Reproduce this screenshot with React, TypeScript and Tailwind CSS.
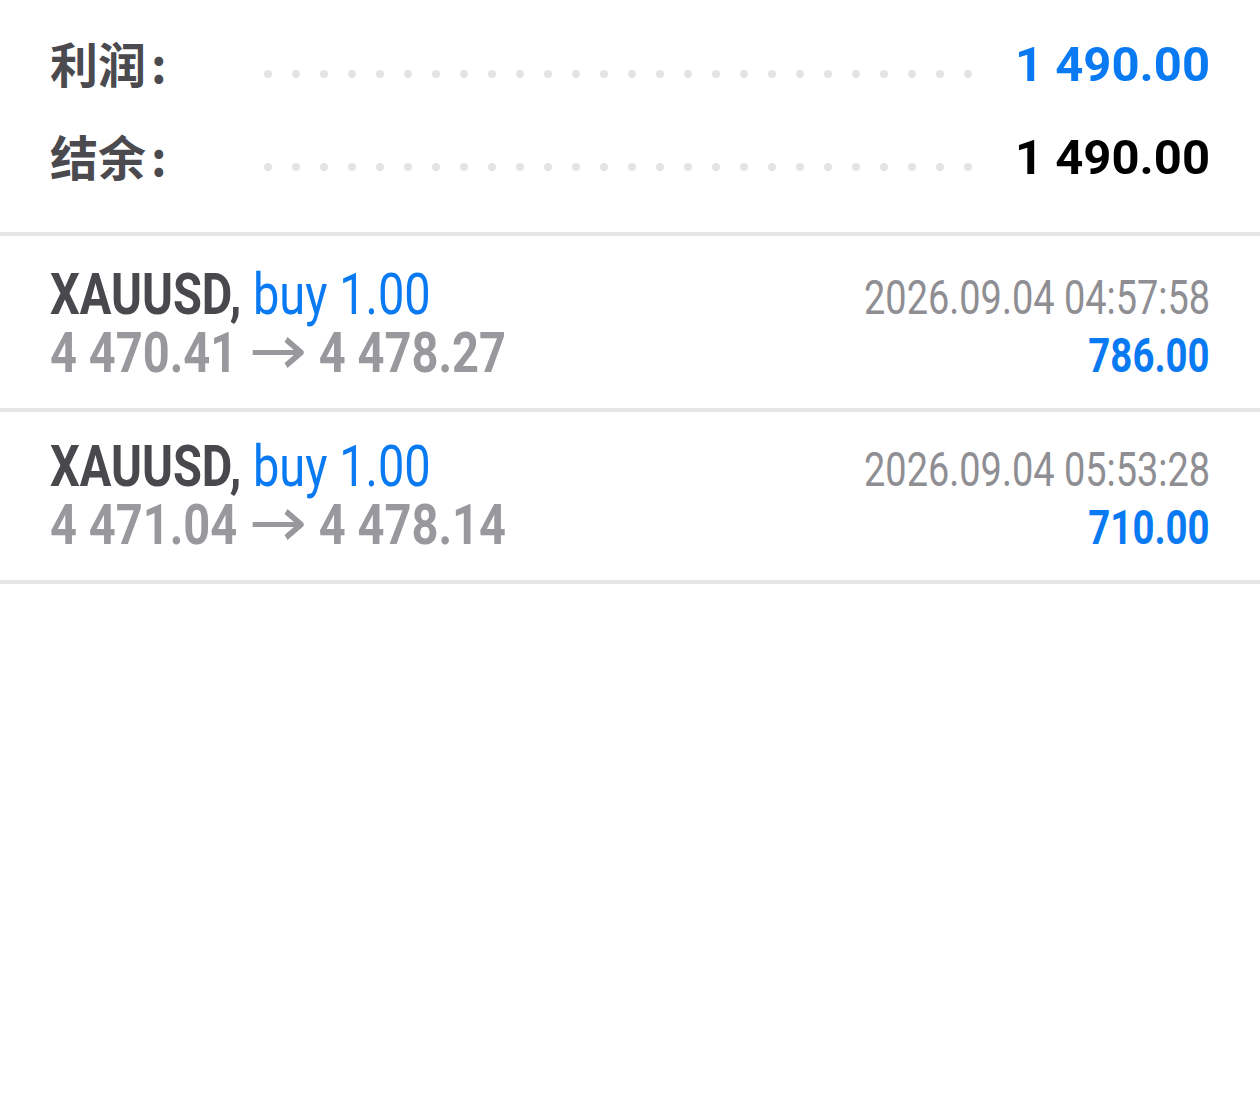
import React from 'react'

type Trade = {
  symbol: string
  side: string
  volume: string
  openPrice: string
  closePrice: string
  time: string
  profit: string
  padTop: string
}

const trades: Trade[] = [
  {
    symbol: 'XAUUSD',
    side: 'buy',
    volume: '1.00',
    openPrice: '4 470.41',
    closePrice: '4 478.27',
    time: '2026.09.04 04:57:58',
    profit: '786.00',
    padTop: 'pt-[28px]',
  },
  {
    symbol: 'XAUUSD',
    side: 'buy',
    volume: '1.00',
    openPrice: '4 471.04',
    closePrice: '4 478.14',
    time: '2026.09.04 05:53:28',
    profit: '710.00',
    padTop: 'pt-[24px]',
  },
]

const DOTS = Array.from({ length: 26 })

const Divider = () => <div className="h-[4px] bg-[#e6e6e6]" />

// drawn wide, the parent span squeezes it horizontally
const Arrow = () => (
  <svg className="mx-[18px] inline-block h-[41px] w-[61px]" fill="none" preserveAspectRatio="none" viewBox="0 0 61 41">
    <path d="M0 15.5 H58" stroke="currentColor" strokeWidth="5" />
    <path d="M40 2.5 L58 15.5 L40 28.5" stroke="currentColor" strokeWidth="6" />
  </svg>
)

const SummaryRow = ({ label, value, valueClass }: { label: string; value: string; valueClass: string }) => (
  <div className="flex h-[93px] items-center">
    <div className="mb-[5px] w-[214px] font-['Noto_Sans_CJK_SC',sans-serif] text-[48px] font-bold leading-none text-[#4a4a4f]">
      {label}
      <span className="ml-[5px]">:</span>
    </div>
    <div className="mt-[18px] flex w-[708px] justify-between">
      {DOTS.map((_, i) => (
        <span className="h-[8px] w-[8px] rounded-full bg-[#e4e4e4]" key={i} />
      ))}
    </div>
    <div className={`flex-1 text-right text-[49px] font-bold leading-none ${valueClass}`}>{value}</div>
  </div>
)

const TradeRow = ({ trade }: { trade: Trade }) => (
  <div className={`px-[50px] pb-[25px] ${trade.padTop}`}>
    <div className="flex items-baseline justify-between leading-[60px]">
      <span className="inline-block origin-left scale-x-[0.81] whitespace-nowrap text-[58px]">
        <span className="font-bold text-[#48484d]">{trade.symbol},</span>{' '}
        <span className="text-[#0a7af2]">
          {trade.side} {trade.volume}
        </span>
      </span>
      <span className="inline-block origin-right scale-x-[0.79] whitespace-nowrap text-[48px] leading-none text-[#8e8e93]">
        {trade.time}
      </span>
    </div>
    <div className="flex items-baseline justify-between leading-[59px]">
      <span className="inline-block origin-left scale-x-[0.84] whitespace-nowrap text-[56px] font-bold text-[#98989d]">
        {trade.openPrice}
        <Arrow />
        {trade.closePrice}
      </span>
      <span className="inline-block origin-right scale-x-[0.8] whitespace-nowrap text-[48px] font-bold leading-none text-[#0a7af2]">
        {trade.profit}
      </span>
    </div>
  </div>
)

export default function App() {
  return (
    <div className="h-[1105px] w-[1260px] bg-white font-['Roboto',sans-serif]">
      <div className="px-[50px] pt-[18px] pb-[28px]">
        <SummaryRow label="利润" value="1 490.00" valueClass="text-[#0a7af2]" />
        <SummaryRow label="结余" value="1 490.00" valueClass="text-black" />
      </div>
      <Divider />
      {trades.map((trade, i) => (
        <React.Fragment key={i}>
          <TradeRow trade={trade} />
          <Divider />
        </React.Fragment>
      ))}
    </div>
  )
}
